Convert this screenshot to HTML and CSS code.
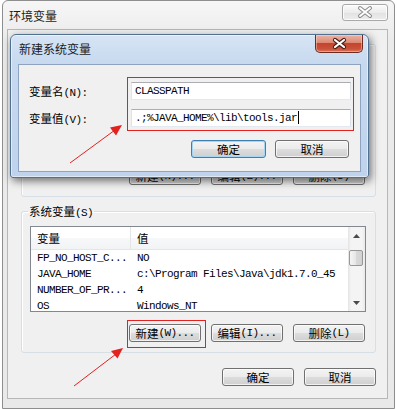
FILE: index.html
```html
<!DOCTYPE html>
<html lang="zh-CN">
<head>
<meta charset="utf-8">
<title>环境变量</title>
<link rel="stylesheet" href="styles.css">
</head>
<body>
<div class="outer">
  <div class="titlebar">
    <span class="title">环境变量</span>
    <span class="close-btn close-inactive">
      <svg width="44" height="15" viewBox="0 0 44 15">
        <path d="M17 3 L27 11 M27 3 L17 11" stroke="#8a8a8a" stroke-width="4" stroke-linecap="round"/>
        <path d="M17 3 L27 11 M27 3 L17 11" stroke="#ffffff" stroke-width="2" stroke-linecap="round"/>
      </svg>
    </span>
  </div>
  <div class="client">
    <fieldset class="group user">
      <div class="list-placeholder"></div>
      <div class="btn-row">
        <button class="btn"><span class="zh">新建</span>(N)...</button>
        <button class="btn"><span class="zh">编辑</span>(E)...</button>
        <button class="btn"><span class="zh">删除</span>(D)</button>
      </div>
    </fieldset>
    <fieldset class="group sys">
      <legend><span class="zh">系统变量</span>(S)</legend>
      <div class="list">
        <div class="list-main">
          <div class="list-head">
            <div class="c1 zh">变量</div>
            <div class="c2 zh">值</div>
          </div>
          <div class="row"><div class="c1">FP_NO_HOST_C...</div><div class="c2">NO</div></div>
          <div class="row"><div class="c1">JAVA_HOME</div><div class="c2">c:\Program Files\Java\jdk1.7.0_45</div></div>
          <div class="row"><div class="c1">NUMBER_OF_PR...</div><div class="c2">4</div></div>
          <div class="row"><div class="c1">OS</div><div class="c2">Windows_NT</div></div>
        </div>
        <div class="scrollbar">
          <div class="sb-btn">
            <svg width="7" height="4" viewBox="0 0 7 4"><polygon points="3.5,0 7,4 0,4" fill="#4a4a4a"/></svg>
          </div>
          <div class="sb-track"><div class="sb-thumb"></div></div>
          <div class="sb-btn">
            <svg width="7" height="4" viewBox="0 0 7 4"><polygon points="0,0 7,0 3.5,4" fill="#4a4a4a"/></svg>
          </div>
        </div>
      </div>
      <div class="btn-row">
        <button class="btn"><span class="zh">新建</span>(W)...</button>
        <button class="btn"><span class="zh">编辑</span>(I)...</button>
        <button class="btn"><span class="zh">删除</span>(L)</button>
      </div>
    </fieldset>
    <div class="footer">
      <button class="btn"><span class="zh">确定</span></button>
      <button class="btn"><span class="zh">取消</span></button>
    </div>
  </div>
</div>

<div class="dialog">
  <div class="dlg-title">
    <span class="title">新建系统变量</span>
    <span class="close-btn close-active">
      <svg width="46" height="16" viewBox="0 0 46 16">
        <path d="M19 4 L28 11 M28 4 L19 11" stroke="#4a1c14" stroke-width="4.2" stroke-linecap="round"/>
        <path d="M19 4 L28 11 M28 4 L19 11" stroke="#ffffff" stroke-width="2.2" stroke-linecap="round"/>
      </svg>
    </span>
  </div>
  <div class="dlg-client">
    <div class="form">
      <div class="labels">
        <div class="lbl"><span class="zh">变量名</span>(N):</div>
        <div class="lbl"><span class="zh">变量值</span>(V):</div>
      </div>
      <div class="redbox">
        <div class="textbox">CLASSPATH</div>
        <div class="textbox">.;%JAVA_HOME%\lib\tools.jar<span class="caret"></span></div>
      </div>
    </div>
    <div class="dlg-buttons">
      <button class="btn default wide"><span class="zh">确定</span></button>
      <button class="btn wide2"><span class="zh">取消</span></button>
    </div>
  </div>
</div>

<svg class="arrows" width="397" height="409" viewBox="0 0 397 409">
  <rect x="127.5" y="320.5" width="78" height="27" fill="none" stroke="#e3211f" stroke-width="1"/>
  <line x1="70" y1="163" x2="115" y2="130" stroke="#e3211f" stroke-width="1"/>
  <polygon points="122,125 116,135.5 110,127.5" fill="#e3211f"/>
  <line x1="74" y1="386" x2="116" y2="354" stroke="#e3211f" stroke-width="1"/>
  <polygon points="123,348 117.5,358.5 111,351" fill="#e3211f"/>
</svg>
</body>
</html>
```

FILE: styles.css
```css
html, body {
  margin: 0;
  padding: 0;
}
body {
  width: 397px;
  height: 409px;
  overflow: hidden;
  position: relative;
  background: #ffffff;
  font-family: "Liberation Mono", "Noto Sans CJK SC", monospace;
  font-size: 11px;
  letter-spacing: -0.6px;
  color: #000;
}
.zh {
  font-family: "Noto Sans CJK SC", sans-serif;
  font-size: 11.5px;
  letter-spacing: 0;
}

/* ---------- outer window ---------- */
.outer {
  margin-left: 2px;
  width: 393px;
  height: 409px;
  box-sizing: border-box;
  border: 1px solid #8e8e8e;
  border-radius: 6px 6px 0 0;
  background: linear-gradient(#f6f6f6, #ebebeb 40px, #e9e9e9);
  padding: 0 6px 9px 4px;
  display: flex;
  flex-direction: column;
}
.titlebar {
  height: 28px;
  flex: none;
  display: flex;
  justify-content: space-between;
  align-items: flex-start;
}
.title {
  font-family: "Noto Sans CJK SC", sans-serif;
  font-size: 12px;
  letter-spacing: 0;
  line-height: 16px;
  color: #1c1c1c;
}
.titlebar .title {
  margin-top: 7px;
  padding-left: 2px;
}
.close-btn {
  box-sizing: border-box;
  display: flex;
  align-items: center;
  justify-content: center;
}
.close-inactive {
  width: 46px;
  height: 17px;
  margin-top: 3px;
  border: 1px solid #a9a9a9;
  border-radius: 3px;
  background: linear-gradient(#fbfbfb, #ececec 50%, #e2e2e2 51%, #ededed);
  box-shadow: inset 0 0 0 1px rgba(255,255,255,0.8);
}
.client {
  height: 370px;
  flex: none;
  box-sizing: border-box;
  border: 1px solid #b7b7b7;
  background: #f0f0f0;
  padding: 14px 11px 0 13px;
}

/* ---------- group boxes ---------- */
fieldset.group {
  margin: 0;
  padding: 8px 9px 11px 8px;
  border: 1px solid #d5dfe5;
  border-radius: 3px;
  min-width: 0;
  box-shadow: inset 1px 1px 0 #fff;
}
fieldset.group legend {
  padding: 0 1px;
  margin-left: -2px;
  line-height: 14px;
  height: 14px;
}
fieldset.group legend .zh {
  line-height: 14px;
}
.sys {
  margin-top: 7px !important;
  padding-bottom: 10px !important;
}
.list-placeholder {
  height: 102px;
}
.btn-row {
  display: flex;
  justify-content: flex-end;
  align-items: flex-start;
  gap: 10px;
  margin-top: 12px;
  padding-right: 1px;
}

/* ---------- buttons ---------- */
.btn {
  width: 72px;
  height: 18px;
  box-sizing: border-box;
  border: 1px solid #707070;
  border-radius: 3px;
  background: linear-gradient(#f3f3f3 0%, #ebebeb 49%, #dddddd 50%, #cfcfcf 100%);
  box-shadow: inset 0 0 0 1px rgba(255,255,255,0.7);
  padding: 0;
  margin: 0;
  font: inherit;
  letter-spacing: inherit;
  color: #000;
  display: flex;
  align-items: center;
  justify-content: center;
  line-height: 16px;
  white-space: nowrap;
}
.btn .zh {
  line-height: 16px;
}
.btn.default {
  border-color: #3c7fb1;
  box-shadow: inset 0 0 0 1px #a6d6f4;
}
.btn.wide {
  width: 75px;
}
.btn.wide2 {
  width: 74px;
}
.footer {
  display: flex;
  justify-content: flex-end;
  gap: 10px;
  margin-top: 15px;
}

/* ---------- list view ---------- */
.list {
  height: 86px;
  box-sizing: border-box;
  border: 1px solid #828790;
  background: #fff;
  display: flex;
}
.list-main {
  flex: 1;
  overflow: hidden;
}
.list-head {
  display: flex;
  height: 23px;
  box-sizing: border-box;
  border-bottom: 1px solid #e5e5e5;
  background: linear-gradient(#ffffff, #ffffff 50%, #f7f8fa 51%, #f2f3f5);
  align-items: stretch;
}
.list-head .c1,
.list-head .c2 {
  display: flex;
  align-items: center;
  line-height: 22px;
}
.c1 {
  width: 100px;
  flex: none;
  box-sizing: border-box;
  padding-left: 6px;
  white-space: nowrap;
  overflow: hidden;
}
.list-head .c1 {
  border-right: 1px solid #e5e5e5;
}
.c2 {
  flex: 1;
  padding-left: 6px;
  white-space: nowrap;
  overflow: hidden;
}
.row {
  display: flex;
  height: 16px;
  line-height: 16px;
}
.scrollbar {
  width: 17px;
  flex: none;
  display: flex;
  flex-direction: column;
  background: linear-gradient(90deg, #e4e4e4, #f4f4f4 3px, #f4f4f4 14px, #e9e9e9);
}
.sb-btn {
  height: 17px;
  flex: none;
  display: flex;
  align-items: center;
  justify-content: center;
}
.sb-track {
  flex: 1;
}
.sb-thumb {
  margin: 6px 2px 0 1px;
  height: 16px;
  box-sizing: border-box;
  border: 1px solid #979797;
  border-radius: 2px;
  background: linear-gradient(90deg, #f5f5f5, #e6e6e6 50%, #d9d9d9 51%, #d2d2d2);
}

/* ---------- dialog (on top) ---------- */
.dialog {
  position: absolute;
  left: 10px;
  top: 34px;
  width: 359px;
  height: 144px;
  box-sizing: border-box;
  border: 1px solid #52708f;
  border-radius: 6px 6px 3px 3px;
  background: linear-gradient(#d6e4f4, #c7d9ef 30px, #bfd3ec);
  box-shadow: 2px 3px 8px rgba(0,0,0,0.55), inset 0 0 0 1px rgba(255,255,255,0.5);
  display: flex;
  flex-direction: column;
  z-index: 2;
}
.dlg-title {
  height: 29px;
  flex: none;
  display: flex;
  justify-content: space-between;
  align-items: flex-start;
}
.dlg-title .title {
  margin-top: 6px;
  padding-left: 8px;
}
.close-active {
  width: 48px;
  height: 18px;
  margin-right: 5px;
  border: 1px solid #6e2b21;
  border-top: none;
  border-radius: 0 0 5px 5px;
  background: linear-gradient(#eab4a6 0%, #dd8a74 45%, #c4442c 50%, #c9513a 80%, #d9745a 100%);
  box-shadow: inset 0 0 0 1px rgba(255,220,210,0.45);
}
.dlg-client {
  margin: 0 7px;
  height: 108px;
  flex: none;
  box-sizing: border-box;
  border: 1px solid #8da3bf;
  background: #f0f0f0;
  padding: 12px 6px 0 10px;
}
.form {
  display: flex;
}
.labels {
  width: 98px;
  flex: none;
  padding-top: 5px;
  display: flex;
  flex-direction: column;
  gap: 9px;
}
.lbl {
  height: 18px;
  line-height: 18px;
  white-space: nowrap;
}
.lbl .zh {
  line-height: 18px;
}
.redbox {
  border: 1px solid #e3211f;
  padding: 4px 2px 3px 3px;
  display: flex;
  flex-direction: column;
  gap: 9px;
}
.textbox {
  width: 220px;
  height: 18px;
  box-sizing: border-box;
  border: 1px solid;
  border-color: #abadb3 #dbdfe6 #e3e9ef #e2e3ea;
  background: #fff;
  padding-left: 3px;
  line-height: 16px;
  white-space: nowrap;
  overflow: hidden;
}
.caret {
  display: inline-block;
  width: 1px;
  height: 13px;
  background: #000;
  vertical-align: -3px;
  margin-left: 1px;
}
.dlg-buttons {
  display: flex;
  justify-content: flex-end;
  gap: 9px;
  margin-top: 9px;
  padding-right: 5px;
}

/* ---------- annotation arrows ---------- */
.arrows {
  position: absolute;
  left: 0;
  top: 0;
  z-index: 3;
  pointer-events: none;
}
```
